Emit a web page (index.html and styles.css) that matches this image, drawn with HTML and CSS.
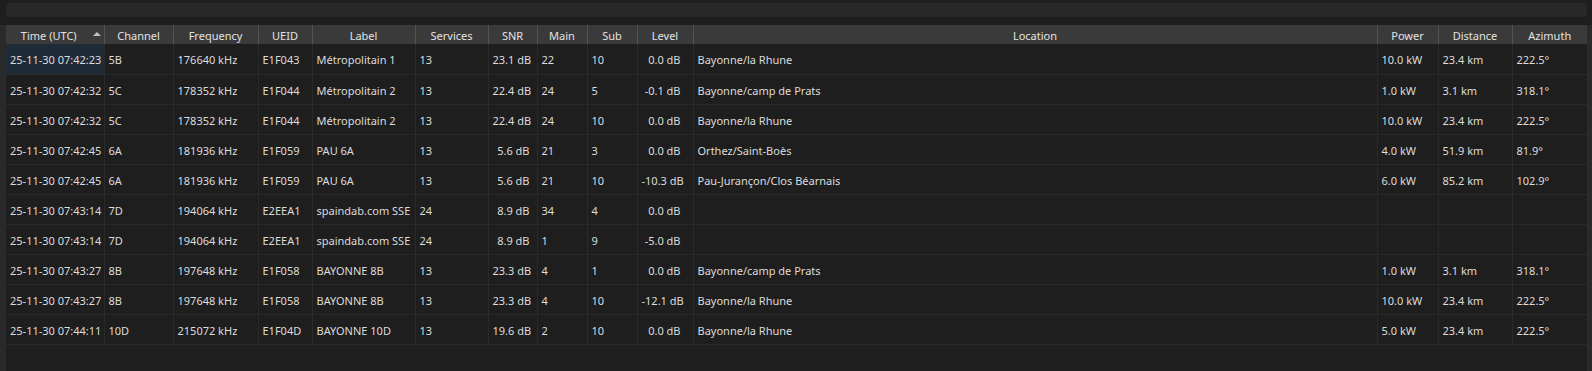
FILE: index.html
```html
<!DOCTYPE html>
<html lang="fr">
<head>
  <meta charset="UTF-8" />
  <title>DAB Scan Log</title>
  <link rel="stylesheet" href="styles.css">
</head>
<body>
  <div class="filter-bar"></div>

  <div class="table-frame">
    <div class="table-view">
      <table class="log-table">
        <colgroup>
          <col style="width: 98px">
          <col style="width: 69px">
          <col style="width: 85px">
          <col style="width: 54px">
          <col style="width: 103px">
          <col style="width: 73px">
          <col style="width: 49px">
          <col style="width: 50px">
          <col style="width: 50px">
          <col style="width: 56px">
          <col style="width: 684px">
          <col style="width: 61px">
          <col style="width: 74px">
          <col style="width: 75px">
        </colgroup>
        <thead>
          <tr>
            <th class="sorted">Time (UTC)<span class="sort-arrow"></span></th>
            <th>Channel</th>
            <th>Frequency</th>
            <th>UEID</th>
            <th>Label</th>
            <th>Services</th>
            <th>SNR</th>
            <th>Main</th>
            <th>Sub</th>
            <th>Level</th>
            <th>Location</th>
            <th>Power</th>
            <th>Distance</th>
            <th>Azimuth</th>
          </tr>
        </thead>
        <tbody>
          <tr>
            <td class="current">25-11-30 07:42:23</td><td>5B</td><td>176640 kHz</td><td>E1F043</td><td>Métropolitain 1</td><td>13</td>
            <td class="snr">23.1 dB</td><td>22</td><td>10</td><td class="level">0.0 dB</td><td>Bayonne/la Rhune</td><td>10.0 kW</td><td>23.4 km</td><td>222.5°</td>
          </tr>
          <tr>
            <td>25-11-30 07:42:32</td><td>5C</td><td>178352 kHz</td><td>E1F044</td><td>Métropolitain 2</td><td>13</td>
            <td class="snr">22.4 dB</td><td>24</td><td>5</td><td class="level">-0.1 dB</td><td>Bayonne/camp de Prats</td><td>1.0 kW</td><td>3.1 km</td><td>318.1°</td>
          </tr>
          <tr>
            <td>25-11-30 07:42:32</td><td>5C</td><td>178352 kHz</td><td>E1F044</td><td>Métropolitain 2</td><td>13</td>
            <td class="snr">22.4 dB</td><td>24</td><td>10</td><td class="level">0.0 dB</td><td>Bayonne/la Rhune</td><td>10.0 kW</td><td>23.4 km</td><td>222.5°</td>
          </tr>
          <tr>
            <td>25-11-30 07:42:45</td><td>6A</td><td>181936 kHz</td><td>E1F059</td><td>PAU 6A</td><td>13</td>
            <td class="snr">5.6 dB</td><td>21</td><td>3</td><td class="level">0.0 dB</td><td>Orthez/Saint-Boès</td><td>4.0 kW</td><td>51.9 km</td><td>81.9°</td>
          </tr>
          <tr>
            <td>25-11-30 07:42:45</td><td>6A</td><td>181936 kHz</td><td>E1F059</td><td>PAU 6A</td><td>13</td>
            <td class="snr">5.6 dB</td><td>21</td><td>10</td><td class="level">-10.3 dB</td><td>Pau-Jurançon/Clos Béarnais</td><td>6.0 kW</td><td>85.2 km</td><td>102.9°</td>
          </tr>
          <tr>
            <td>25-11-30 07:43:14</td><td>7D</td><td>194064 kHz</td><td>E2EEA1</td><td>spaindab.com SSE</td><td>24</td>
            <td class="snr">8.9 dB</td><td>34</td><td>4</td><td class="level">0.0 dB</td><td></td><td></td><td></td><td></td>
          </tr>
          <tr>
            <td>25-11-30 07:43:14</td><td>7D</td><td>194064 kHz</td><td>E2EEA1</td><td>spaindab.com SSE</td><td>24</td>
            <td class="snr">8.9 dB</td><td>1</td><td>9</td><td class="level">-5.0 dB</td><td></td><td></td><td></td><td></td>
          </tr>
          <tr>
            <td>25-11-30 07:43:27</td><td>8B</td><td>197648 kHz</td><td>E1F058</td><td>BAYONNE 8B</td><td>13</td>
            <td class="snr">23.3 dB</td><td>4</td><td>1</td><td class="level">0.0 dB</td><td>Bayonne/camp de Prats</td><td>1.0 kW</td><td>3.1 km</td><td>318.1°</td>
          </tr>
          <tr>
            <td>25-11-30 07:43:27</td><td>8B</td><td>197648 kHz</td><td>E1F058</td><td>BAYONNE 8B</td><td>13</td>
            <td class="snr">23.3 dB</td><td>4</td><td>10</td><td class="level">-12.1 dB</td><td>Bayonne/la Rhune</td><td>10.0 kW</td><td>23.4 km</td><td>222.5°</td>
          </tr>
          <tr>
            <td>25-11-30 07:44:11</td><td>10D</td><td>215072 kHz</td><td>E1F04D</td><td>BAYONNE 10D</td><td>13</td>
            <td class="snr">19.6 dB</td><td>2</td><td>10</td><td class="level">0.0 dB</td><td>Bayonne/la Rhune</td><td>5.0 kW</td><td>23.4 km</td><td>222.5°</td>
          </tr>
        </tbody>
      </table>
    </div>
  </div>
</body>
</html>
```

FILE: styles.css
```css
* {
  box-sizing: border-box;
}

html,
body {
  height: 100%;
}

body {
  margin: 0;
  background: #1e1e1e;
  color: #dcdcdc;
  font-family: 'Noto Sans', 'Liberation Sans', sans-serif;
  font-size: 11px;
  display: flex;
  flex-direction: column;
  overflow: hidden;
}

/* Search / filter strip above the table */
.filter-bar {
  height: 14px;
  margin: 3px 5px 8px 6px;
  background: #282828;
  border-radius: 3px;
}

.table-frame {
  flex: 1;
  background: #2a2a2a;
  padding: 0 5px 0 6px;
}

.table-view {
  height: 100%;
  background: #1e1e1e;
}

.log-table {
  width: 1581px;
  table-layout: fixed;
  border-collapse: collapse;
}

.log-table th {
  height: 19px;
  padding: 1px 4px 0;
  background: #3a3a3a;
  color: #e2e2e2;
  font-weight: normal;
  text-align: center;
  white-space: nowrap;
  border-right: 1px solid #535353;
  position: relative;
}

.log-table th.sorted {
  padding-right: 16px;
}

.log-table th:last-child {
  border-right: none;
}

.sort-arrow {
  position: absolute;
  right: 3px;
  top: 7px;
  width: 0;
  height: 0;
  border-left: 4px solid transparent;
  border-right: 4px solid transparent;
  border-bottom: 4px solid #c4c4c4;
}

.log-table td {
  height: 30px;
  padding: 2px 4px 0;
  white-space: nowrap;
  overflow: hidden;
  border-bottom: 1px solid #2a2a2a;
  border-right: 1px solid #2a2a2a;
}

.log-table td:last-child {
  border-right: none;
}

.log-table td.current {
  background: #1f2b37;
}

.log-table td.snr {
  text-align: right;
  padding-right: 7px;
}

.log-table td.level {
  text-align: right;
  padding-right: 12px;
}
```
